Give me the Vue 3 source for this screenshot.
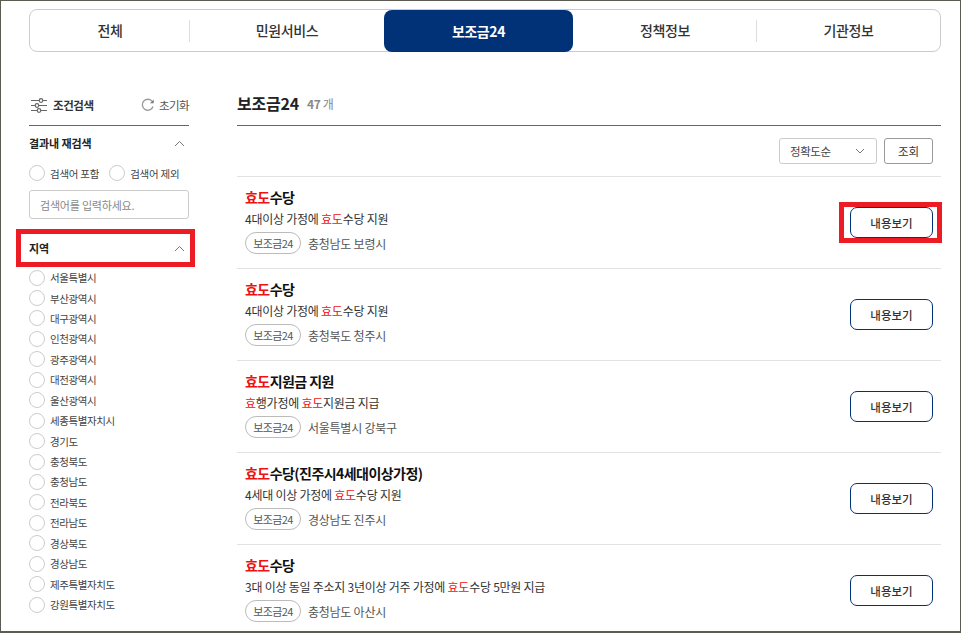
<template>
  <div class="page">
    <nav class="tabs">
      <a v-for="t in tabs" :key="t.label" :class="['tab', { active: t.active, sep: t.sep }]">{{ t.label }}</a>
    </nav>

    <div class="content">
      <aside class="side">
        <div class="side-head">
          <svg class="ico-filter" width="16" height="15" viewBox="0 0 16 15" fill="none" stroke="#666" stroke-width="1.2">
            <path d="M0 2.5h16M0 7.5h16M0 12.5h16" />
            <circle cx="10" cy="2.5" r="1.8" fill="#fff" />
            <circle cx="6" cy="7.5" r="1.8" fill="#fff" />
            <circle cx="8" cy="12.5" r="1.8" fill="#fff" />
          </svg>
          <strong>조건검색</strong>
          <span class="reset">
            <svg width="14" height="14" viewBox="0 0 15 15" fill="none">
              <path d="M12.9 9.2A5.9 5.9 0 1 1 11.6 3.2" stroke="#999" stroke-width="1.5" />
              <path d="M13.6 1.6v4h-4z" fill="#777" />
            </svg>
            초기화
          </span>
        </div>

        <div class="group-head">
          <b>결과내 재검색</b>
          <svg class="chev" width="11" height="7" viewBox="0 0 11 7" fill="none"><path d="M1 6l4.5-4.5L10 6" stroke="#777" /></svg>
        </div>
        <div class="kw-opts">
          <label class="radio"><i></i>검색어 포함</label>
          <label class="radio"><i></i>검색어 제외</label>
        </div>
        <input class="kw" type="text" placeholder="검색어를 입력하세요." />

        <div class="group-head region">
          <b>지역</b>
          <svg class="chev" width="11" height="7" viewBox="0 0 11 7" fill="none"><path d="M1 6l4.5-4.5L10 6" stroke="#777" /></svg>
          <span class="mark mark-region"></span>
        </div>
        <label v-for="r in regions" :key="r" class="radio region-item"><i></i>{{ r }}</label>
      </aside>

      <main class="main">
        <div class="main-head">
          <h2>보조금24</h2>
          <span class="count"><b>47</b> 개</span>
        </div>
        <div class="sort-bar">
          <div class="select">
            정확도순
            <svg width="10" height="6" viewBox="0 0 10 6" fill="none"><path d="M1 1l4 4 4-4" stroke="#777" /></svg>
          </div>
          <button class="search-btn">조회</button>
        </div>

        <div v-for="(item, i) in items" :key="i" class="row">
          <div class="row-body">
            <div class="title"><em>효도</em>{{ item.title }}</div>
            <div class="desc">
              <template v-for="(part, j) in item.desc" :key="j">
                <em v-if="part.hl">{{ part.text }}</em>
                <template v-else>{{ part.text }}</template>
              </template>
            </div>
            <div class="meta"><span class="tag">보조금24</span>{{ item.place }}</div>
          </div>
          <div class="btn-wrap">
            <button class="more">내용보기</button>
            <span v-if="i === 0" class="mark mark-btn"></span>
          </div>
        </div>
      </main>
    </div>
  </div>
</template>

<script setup>
const tabs = [
  { label: '전체', sep: true },
  { label: '민원서비스' },
  { label: '보조금24', active: true },
  { label: '정책정보', sep: true },
  { label: '기관정보' },
];

const regions = [
  '서울특별시', '부산광역시', '대구광역시', '인천광역시', '광주광역시', '대전광역시',
  '울산광역시', '세종특별자치시', '경기도', '충청북도', '충청남도', '전라북도',
  '전라남도', '경상북도', '경상남도', '제주특별자치도', '강원특별자치도',
];

const hl = { text: '효도', hl: true };
const items = [
  { title: '수당', desc: [{ text: '4대이상 가정에 ' }, hl, { text: '수당 지원' }], place: '충청남도 보령시' },
  { title: '수당', desc: [{ text: '4대이상 가정에 ' }, hl, { text: '수당 지원' }], place: '충청북도 청주시' },
  { title: '지원금 지원', desc: [{ text: '효', hl: true }, { text: '행가정에 ' }, hl, { text: '지원금 지급' }], place: '서울특별시 강북구' },
  { title: '수당(진주시4세대이상가정)', desc: [{ text: '4세대 이상 가정에 ' }, hl, { text: '수당 지원' }], place: '경상남도 진주시' },
  { title: '수당', desc: [{ text: '3대 이상 동일 주소지 3년이상 거주 가정에 ' }, hl, { text: '수당 5만원 지급' }], place: '충청남도 아산시' },
];
</script>

<style>
html, body { margin: 0; overflow: hidden; background: #fff; }
</style>

<style scoped>
.page {
  box-sizing: border-box;
  width: 961px;
  height: 633px;
  overflow: hidden;
  border: 1px solid #5c5c54;
  border-bottom-width: 2px;
  padding: 8px 19px 0 28px;
  background: #fff;
  color: #333;
  font-family: "Noto Sans CJK KR", "Noto Sans", sans-serif;
  letter-spacing: -0.4px;
}

.tabs {
  display: grid;
  grid-template-columns: 160px 194px 189px 184px 183px;
  height: 43px;
  box-sizing: border-box;
  border: 1px solid #ccc;
  border-radius: 8px;
}
.tab {
  position: relative;
  display: flex;
  align-items: center;
  justify-content: center;
  padding-bottom: 1px;
  font-size: 14px;
  font-weight: 500;
  color: #333;
}
.tab.sep::after {
  content: '';
  position: absolute;
  right: 0;
  top: 10px;
  height: 22px;
  width: 1px;
  background: #ddd;
}
.tab.active {
  background: #013176;
  color: #fff;
  font-weight: 700;
  border-radius: 8px;
  margin-bottom: -1px;
  padding-bottom: 0;
}

.content {
  display: flex;
  gap: 48px;
  margin-top: 32px;
}

.side { width: 160px; flex: none; }
.side-head {
  display: flex;
  align-items: center;
  height: 42px;
  padding: 1px 0 0 2px;
  box-sizing: border-box;
  border-bottom: 1px solid #666;
  font-size: 11.5px;
}
.ico-filter { margin-right: 6px; }
.side-head strong { font-weight: 700; color: #333; }
.reset {
  display: flex;
  align-items: center;
  gap: 4px;
  margin-left: auto;
  color: #555;
  font-size: 11.5px;
  letter-spacing: -0.6px;
}

.group-head {
  position: relative;
  display: flex;
  justify-content: space-between;
  align-items: center;
  height: 20px;
  margin-top: 7px;
  font-size: 11px;
  letter-spacing: -0.1px;
  color: #222;
}
.group-head b { font-weight: 700; }
.chev { margin-right: 4px; }

.kw-opts { display: flex; gap: 10px; margin-top: 12px; }
.radio {
  display: flex;
  align-items: center;
  gap: 5px;
  height: 16px;
  font-size: 10.5px;
  color: #444;
}
.radio i {
  flex: none;
  width: 14px;
  height: 14px;
  border: 1px solid #ccc;
  border-radius: 50%;
}
.kw-opts .radio { letter-spacing: -0.25px; }
.kw {
  display: block;
  box-sizing: border-box;
  width: 160px;
  height: 29px;
  margin-top: 9px;
  padding: 0 10px;
  border: 1px solid #ccc;
  border-radius: 3px;
  outline: none;
  font: inherit;
  font-size: 11px;
  letter-spacing: -0.2px;
}
.kw::placeholder { color: #888; }

.region { margin: 19px 0 11.6px; }
.region-item { margin-bottom: 4.44px; }

.mark {
  position: absolute;
  box-sizing: border-box;
  border: 5px solid #ed1c24;
  pointer-events: none;
}
.mark-region { left: -13px; right: -6px; top: -9px; bottom: -9px; }
.mark-btn { left: -11px; right: -9px; top: -5px; bottom: -5px; }

.main { flex: 1; min-width: 0; }
.main-head {
  display: flex;
  align-items: center;
  gap: 8px;
  height: 42px;
  padding-bottom: 3px;
  box-sizing: border-box;
  border-bottom: 1px solid #666;
}
.main-head h2 { margin: 0; font-size: 16px; font-weight: 700; color: #222; letter-spacing: -0.2px; }
.count { font-size: 12px; color: #888; }
.count b { font-weight: 700; }

.sort-bar {
  display: flex;
  justify-content: flex-end;
  gap: 7px;
  padding: 12px 8px 12px 0;
  border-bottom: 1px solid #e2e2e2;
}
.select {
  box-sizing: border-box;
  display: flex;
  align-items: center;
  justify-content: space-between;
  width: 98px;
  height: 26px;
  padding: 0 11px 0 10px;
  border: 1px solid #ccc;
  border-radius: 3px;
  font-size: 11.5px;
  color: #444;
}
.search-btn {
  box-sizing: border-box;
  width: 49px;
  height: 26px;
  padding: 0;
  border: 1px solid #999;
  border-radius: 3px;
  background: #fff;
  font: inherit;
  font-size: 11.5px;
  color: #333;
}

.row {
  display: flex;
  align-items: center;
  justify-content: space-between;
  box-sizing: border-box;
  height: 92.1px;
  padding: 0 8px;
  border-bottom: 1px solid #e2e2e2;
}
.row em { font-style: normal; color: #ee1111; }
.row-body { margin-bottom: 3px; }
.title { font-size: 14px; font-weight: 700; color: #111; line-height: 18px; letter-spacing: -0.55px; }
.desc { font-size: 12px; color: #333; line-height: 18px; margin-top: 4px; letter-spacing: -0.25px; }
.meta {
  display: flex;
  align-items: center;
  margin-top: 4px;
  font-size: 12px;
  letter-spacing: -0.25px;
  color: #555;
}
.tag {
  box-sizing: border-box;
  width: 56px;
  height: 22px;
  margin-right: 7px;
  border: 1px solid #bbb;
  border-radius: 11px;
  text-align: center;
  line-height: 20px;
  font-size: 11px;
  letter-spacing: -0.6px;
}
.btn-wrap { position: relative; display: flex; }
.more {
  box-sizing: border-box;
  width: 83px;
  height: 31px;
  padding: 0;
  border: 1px solid #013176;
  border-radius: 7px;
  background: #fff;
  font: inherit;
  font-size: 11.5px;
  font-weight: 500;
  color: #333;
}
</style>
